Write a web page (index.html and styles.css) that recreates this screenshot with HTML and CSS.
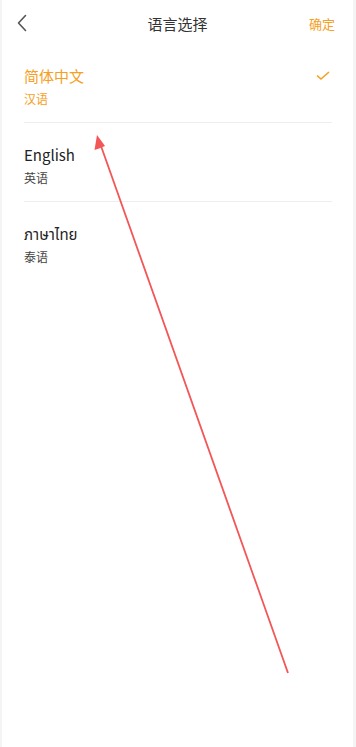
FILE: index.html
```html
<!DOCTYPE html>
<html lang="zh">
<head>
<meta charset="utf-8">
<link rel="stylesheet" href="styles.css">
</head>
<body>
<div class="page">
  <header class="nav">
    <div class="nav-left">
      <svg class="back" width="12" height="18" viewBox="0 0 12 18"><path d="M9.5 1.5 L2.5 9 L9.5 16.5" fill="none" stroke="#555" stroke-width="1.6" stroke-linecap="round" stroke-linejoin="round"/></svg>
    </div>
    <div class="nav-title">语言选择</div>
    <div class="nav-right">确定</div>
  </header>
  <ul class="list">
    <li class="item active">
      <div class="texts">
        <div class="name">简体中文</div>
        <div class="sub">汉语</div>
      </div>
      <svg class="check" width="14" height="10" viewBox="0 0 14 10"><path d="M1 4.5 L5 8 L13 1" fill="none" stroke="#f5a01e" stroke-width="1.6"/></svg>
    </li>
    <li class="item">
      <div class="texts">
        <div class="name">English</div>
        <div class="sub">英语</div>
      </div>
    </li>
    <li class="item last">
      <div class="texts">
        <div class="name">ภาษาไทย</div>
        <div class="sub">泰语</div>
      </div>
    </li>
  </ul>
  <svg class="arrow" width="356" height="747" viewBox="0 0 356 747">
    <line x1="288" y1="673" x2="101" y2="146" stroke="#f25656" stroke-width="1.8"/>
    <path d="M97 135 L94.5 150 L99 148.5 L105 146 Z" fill="#f25656"/>
  </svg>
</div>
</body>
</html>
```
FILE: styles.css
```css
* { box-sizing: border-box; }
html, body { margin: 0; padding: 0; }
body {
  background: #f4f4f4;
  font-family: "Noto Sans CJK SC", "Noto Sans", "Noto Sans Thai", sans-serif;
  width: 356px;
  height: 747px;
  overflow: hidden;
}
.page {
  position: relative;
  margin-left: 2px;
  width: 351px;
  height: 747px;
  background: #ffffff;
}
.nav {
  height: 44px;
  display: grid;
  grid-template-columns: 80px 1fr 80px;
  align-items: center;
}
.nav-left { padding-left: 14px; display: flex; align-items: center; }
.back { display: block; margin-top: 2px; }
.nav-title {
  text-align: center;
  font-size: 15px;
  color: #333;
  margin-top: 2px;
}
.nav-right {
  text-align: right;
  padding-right: 18px;
  font-size: 13px;
  color: #f5a01e;
  margin-top: 2px;
}
.list {
  list-style: none;
  margin: 0;
  padding: 0 21px 0 22px;
}
.item {
  display: flex;
  align-items: flex-start;
  justify-content: space-between;
  padding: 21px 0 14px;
  border-bottom: 1px solid #eeeeee;
}
.item.last { border-bottom: none; }
.texts { display: flex; flex-direction: column; gap: 4px; }
.name { font-size: 15px; line-height: 21px; color: #222; }
.sub { font-size: 12px; line-height: 18px; color: #444; }
.item.active .name, .item.active .sub { color: #f5a01e; }
.check { margin-top: 6px; margin-right: 2px; }
.arrow {
  position: absolute;
  left: -2px;
  top: 0;
  pointer-events: none;
}
```
